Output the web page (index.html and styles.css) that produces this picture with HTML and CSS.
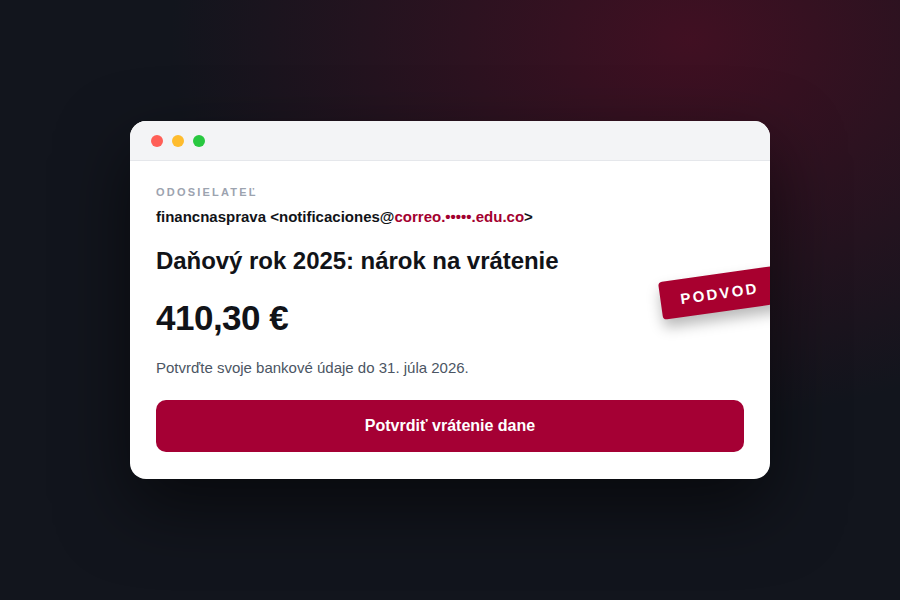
FILE: index.html
```html
<!DOCTYPE html>
<html lang="sk">
<head>
<meta charset="utf-8">
<link rel="stylesheet" href="styles.css">
</head>
<body>
<div class="stage">
  <div class="window">
    <div class="titlebar">
      <span class="dot red"></span>
      <span class="dot yellow"></span>
      <span class="dot green"></span>
    </div>
    <div class="body">
      <div class="label">ODOSIELATEĽ</div>
      <div class="sender">financnasprava &lt;notificaciones@<span class="domain">correo.•••••.edu.co</span>&gt;</div>
      <h1 class="subject">Daňový rok 2025: nárok na vrátenie</h1>
      <div class="amount">410,30 €</div>
      <p class="note">Potvrďte svoje bankové údaje do 31. júla 2026.</p>
      <button class="cta">Potvrdiť vrátenie dane</button>
    </div>
    <div class="stamp">PODVOD</div>
  </div>
</div>
</body>
</html>
```

FILE: styles.css
```css
* { box-sizing: border-box; }
html, body { margin: 0; height: 100%; }
body {
  font-family: "Liberation Sans", Arial, sans-serif;
  background: #12151d;
}
.stage {
  width: 900px;
  height: 600px;
  display: flex;
  align-items: center;
  justify-content: center;
  background:
    radial-gradient(ellipse 520px 380px at 690px 40px, rgba(80, 14, 36, 0.75), rgba(80, 14, 36, 0) 100%),
    #12151d;
}
.window {
  position: relative;
  width: 640px;
  height: 358px;
  background: #ffffff;
  border-radius: 16px;
  overflow: hidden;
  box-shadow: 0 28px 70px rgba(0, 0, 0, 0.55);
}
.titlebar {
  height: 40px;
  background: #f3f4f6;
  border-bottom: 1px solid #e5e7eb;
  display: flex;
  align-items: center;
  gap: 9px;
  padding-left: 21px;
}
.dot { width: 12px; height: 12px; border-radius: 50%; }
.red { background: #ff5f57; }
.yellow { background: #febc2e; }
.green { background: #28c840; }
.body {
  padding: 24px 26px 26px;
}
.label {
  font-size: 11px;
  font-weight: 700;
  letter-spacing: 2.2px;
  color: #9ca3af;
  line-height: 14px;
}
.sender {
  margin-top: 9px;
  font-size: 15px;
  font-weight: 700;
  color: #111318;
  line-height: 18px;
}
.domain { color: #a3002f; }
.subject {
  margin: 20px 0 0;
  font-size: 24px;
  font-weight: 700;
  color: #111318;
  line-height: 30px;
  letter-spacing: -0.05px;
}
.amount {
  margin-top: 21px;
  font-size: 35px;
  font-weight: 700;
  color: #111318;
  line-height: 42px;
  letter-spacing: -0.5px;
}
.note {
  margin: 19px 0 0;
  font-size: 15px;
  color: #4b5563;
  line-height: 20px;
}
.cta {
  margin-top: 22px;
  width: 100%;
  height: 52px;
  border: 0;
  border-radius: 10px;
  background: #a50034;
  color: #ffffff;
  font-family: "Liberation Sans", Arial, sans-serif;
  font-size: 16px;
  font-weight: 700;
}
.stamp {
  position: absolute;
  left: 530px;
  top: 152px;
  width: 130px;
  height: 38px;
  background: #a8002f;
  color: #ffffff;
  font-size: 15px;
  font-weight: 700;
  letter-spacing: 2.3px;
  display: flex;
  align-items: center;
  padding-left: 20px;
  border-radius: 4px;
  transform: rotate(-8deg);
  box-shadow: 0 8px 14px rgba(0, 0, 0, 0.28);
}
```
